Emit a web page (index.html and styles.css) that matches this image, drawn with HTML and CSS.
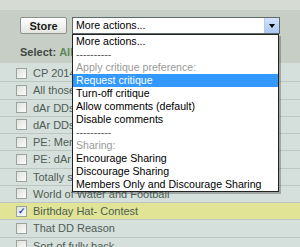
FILE: index.html
```html
<!DOCTYPE html>
<html>
<head>
  <title>Deviations</title>
  <link rel="stylesheet" href="styles.css">
</head>
<body>
  <div class="band"></div>

  <div class="toolbar">
    <div class="actions">
      <button class="store">Store</button>
      <div class="picker">
        <div class="picker-value">More actions...</div>
        <div class="picker-arrow"><span class="tri"></span></div>

        <ul class="menu">
          <li>More actions...</li>
          <li class="dash">----------</li>
          <li class="group">Apply critique preference:</li>
          <li class="on">Request critique</li>
          <li>Turn-off critique</li>
          <li>Allow comments (default)</li>
          <li>Disable comments</li>
          <li class="dash">----------</li>
          <li class="group">Sharing:</li>
          <li>Encourage Sharing</li>
          <li>Discourage Sharing</li>
          <li>Members Only and Discourage Sharing</li>
        </ul>
      </div>
    </div>
    <div class="selectline"><b>Select:</b> <span class="link">All,</span></div>
  </div>

  <div class="rows">
    <div class="row"><span class="box"></span>CP 2014</div>
    <div class="row"><span class="box"></span>All those</div>
    <div class="row"><span class="box"></span>dAr DDs</div>
    <div class="row"><span class="box"></span>dAr DDs</div>
    <div class="row"><span class="box"></span>PE: Members</div>
    <div class="row"><span class="box"></span>PE: dAr</div>
    <div class="row"><span class="box"></span>Totally s</div>
    <div class="row"><span class="box"></span>World of Water and Football</div>
    <div class="row picked"><span class="box checked">&#10003;</span>Birthday Hat- Contest</div>
    <div class="row"><span class="box"></span>That DD Reason</div>
    <div class="row"><span class="box"></span>Sort of fully back</div>
  </div>
</body>
</html>
```

FILE: styles.css
```css
body {
  margin: 0;
  background: #d5dfdb;
  font-family: "Liberation Sans", Arial, sans-serif;
  overflow: hidden;
}

.band {
  height: 10px;
  background: #d6dcd3;
}

.toolbar {
  height: 53px;
  background: #c7cec5;
  padding: 7px 0 0 20px;
  box-sizing: border-box;
}

.actions {
  display: flex;
  gap: 5px;
  height: 17px;
}

.store {
  width: 47px;
  height: 17px;
  padding: 0;
  border: 1px solid #8e928e;
  border-radius: 2px;
  background: linear-gradient(#ffffff, #e4e4e0);
  font-family: inherit;
  font-size: 11px;
  font-weight: bold;
  color: #1a1a1a;
}

.picker {
  position: relative;
  width: 208px;
  height: 17px;
  box-sizing: border-box;
  border: 1px solid #5f6a6a;
  background: #fff;
  display: flex;
}

.picker-value {
  flex: 1;
  font-size: 10.6px;
  line-height: 15px;
  padding-left: 3px;
  color: #000;
}

.picker-arrow {
  width: 14px;
  margin: 0;
  background: linear-gradient(#d3e3fb, #aac8f0);
  border-left: 1px solid #b9cbe6;
  display: flex;
  align-items: center;
  justify-content: center;
}

.tri {
  border-left: 3.5px solid transparent;
  border-right: 3.5px solid transparent;
  border-top: 4px solid #000;
}

.menu {
  position: absolute;
  top: 16px;
  left: -1px;
  width: 207px;
  margin: 0;
  padding: 0;
  list-style: none;
  box-sizing: border-box;
  border: 1px solid #222;
  background: #fff;
  box-shadow: 2px 2px 0 rgba(60, 60, 60, 0.35);
  z-index: 2;
}

.menu li {
  height: 13px;
  line-height: 13px;
  font-size: 10.6px;
  padding-left: 3px;
  color: #000;
  white-space: nowrap;
}

.menu .dash { color: #555; }
.menu .group { color: #9a9a9a; }
.menu .on {
  background: #3399ff;
  color: #fff;
}

.selectline {
  margin-top: 12px;
  font-size: 11px;
  color: #3d4a42;
}

.selectline .link { color: #5b8a5b; font-weight: bold; }

.rows {
  margin-top: 2px;
}

.row {
  height: 16.25px;
  border-bottom: 1px solid #bec6c2;
  display: flex;
  align-items: center;
  font-size: 11px;
  color: #4d5d55;
  white-space: nowrap;
}

.row.picked { background: #e0e494; }

.box {
  width: 9px;
  height: 9px;
  margin: 0 6px 0 16px;
  border: 1px solid #9aa49d;
  background: linear-gradient(135deg, #dfe3df, #fbfbfb);
  font-size: 9px;
  line-height: 9px;
  text-align: center;
  color: #2a3fb0;
  font-weight: bold;
}
```
